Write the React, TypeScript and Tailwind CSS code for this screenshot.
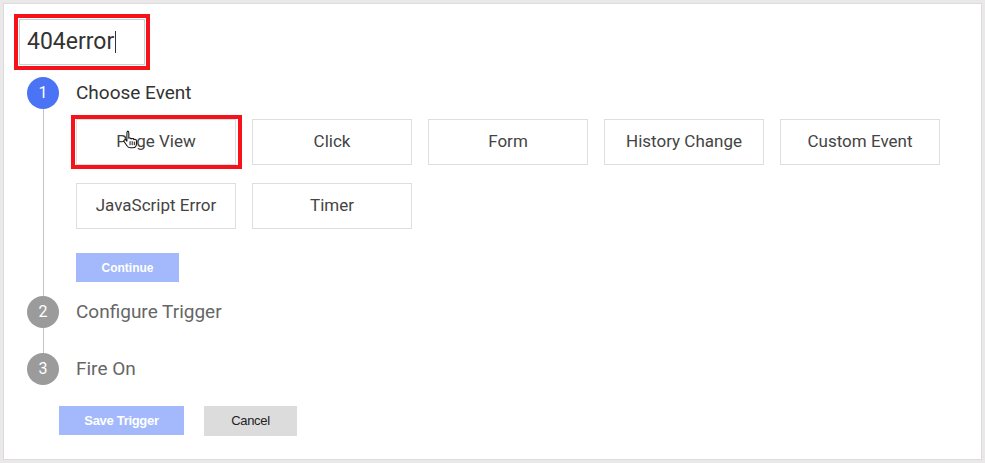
import React from 'react';

const HandCursor: React.FC = () => (
  <svg className="absolute left-[45px] top-[10px] w-[17px] h-[19px]" viewBox="0 0 16 18" fill="none">
    <path
      d="M5 1.2c.8 0 1.4.6 1.4 1.4v5.1c.3-.2.6-.2.9-.2.7 0 1.2.4 1.4 1 .3-.3.7-.4 1.1-.4.7 0 1.2.4 1.4 1 .3-.2.6-.3 1-.3.8 0 1.4.7 1.4 1.5v3c0 2-1.5 3.5-3.5 3.5H7.8c-1.1 0-2.1-.5-2.8-1.4l-3-4.3c-.4-.6-.3-1.300.3-1.700.5-.4 1.2-.3 1.6.2l.7.9V2.6c0-.8.6-1.4 1.4-1.4z"
      fill="#fff"
      stroke="#111"
      strokeWidth="1"
      strokeLinejoin="round"
    />
    <path d="M7.6 11v3M9.6 11v3M11.6 11.4v2.6" stroke="#111" strokeWidth="0.9" strokeLinecap="round" />
  </svg>
);

const EventButton: React.FC<{ label: string; highlight?: boolean }> = ({ label, highlight }) => (
  <div className="relative w-[160px] h-[46px] border border-[#dedede] bg-white flex items-center justify-center text-[17px] text-[#444]">
    {label}
    {highlight && (
      <>
        <HandCursor />
        <div className="absolute -left-[6px] -right-[7px] -top-[5px] -bottom-[5px] border-4 border-[#f5121a]" />
      </>
    )}
  </div>
);

const StepCircle: React.FC<{ n: number; active?: boolean }> = ({ n, active }) => (
  <div
    className={
      'w-8 h-8 rounded-full flex items-center justify-center text-white text-[16px] shrink-0 ' +
      (active ? 'bg-[#4a74f5]' : 'bg-[#9b9b9b]')
    }
  >
    {n}
  </div>
);

export default function App() {
  return (
    <div className="w-[985px] h-[463px] bg-[#ebe8ea] p-[3px] flex" style={{ fontFamily: 'Roboto, "Liberation Sans", sans-serif' }}>
      <div className="flex-1 bg-white border border-[#dcdcdc] flex flex-col">
        <div className="ml-[10px] mt-[10px] w-[136px] h-[56px] border-[4px] border-[#f5121a] p-px">
          <div className="w-full h-full border border-[#cfcfcf] flex items-center pl-[7px] text-[23px] text-[#333]">
            404error
            <span className="ml-[1px] w-px h-[22px] bg-[#333]" />
          </div>
        </div>

        <div className="mt-[7px] pl-[23px] flex flex-col">
          {/* step 1 */}
          <div className="flex gap-[17px]">
            <div className="flex flex-col items-center">
              <StepCircle n={1} active />
              <div className="flex-1 w-px bg-[#c4c4c4]" />
            </div>
            <div className="flex flex-col pb-[14px]">
              <div className="h-8 flex items-center text-[19px] text-[#333]">Choose Event</div>
              <div className="mt-[10px] flex gap-[16px]">
                <EventButton label="Page View" highlight />
                <EventButton label="Click" />
                <EventButton label="Form" />
                <EventButton label="History Change" />
                <EventButton label="Custom Event" />
              </div>
              <div className="mt-[18px] flex gap-[16px]">
                <EventButton label="JavaScript Error" />
                <EventButton label="Timer" />
              </div>
              <button
                className="mt-[24px] w-[103px] h-[29px] bg-[#a3b9fb] text-white text-[12px] font-bold"
                style={{ fontFamily: '"Liberation Sans", Arial, sans-serif' }}
              >
                Continue
              </button>
            </div>
          </div>

          {/* step 2 */}
          <div className="flex gap-[17px]">
            <div className="flex flex-col items-center">
              <StepCircle n={2} />
              <div className="flex-1 w-px bg-[#c4c4c4]" />
            </div>
            <div className="h-8 flex items-center text-[19px] text-[#666] mb-[25px]">Configure Trigger</div>
          </div>

          {/* step 3 */}
          <div className="flex gap-[17px]">
            <StepCircle n={3} />
            <div className="h-8 flex items-center text-[19px] text-[#666]">Fire On</div>
          </div>
        </div>

        <div className="ml-[55px] mt-[21px] flex gap-[20px]" style={{ fontFamily: '"Liberation Sans", Arial, sans-serif' }}>
          <button className="w-[125px] h-[29px] bg-[#a3b9fb] text-white text-[13px] font-bold tracking-[-0.3px]">Save Trigger</button>
          <button className="w-[93px] h-[30px] bg-[#dcdcdc] text-[#222] text-[13px] tracking-[-0.3px]">Cancel</button>
        </div>
      </div>
    </div>
  );
}
